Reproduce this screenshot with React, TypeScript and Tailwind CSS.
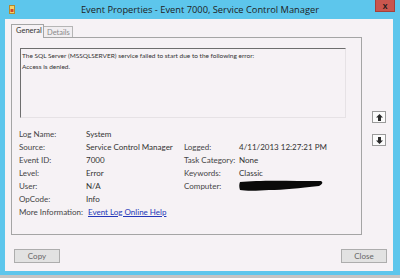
import React from 'react';

const LEFT_ROWS: [string, React.ReactNode][] = [
  ['Log Name:', 'System'],
  ['Source:', 'Service Control Manager'],
  ['Event ID:', '7000'],
  ['Level:', 'Error'],
  ['User:', 'N/A'],
  ['OpCode:', 'Info'],
];

const RIGHT_ROWS: Record<number, [string, React.ReactNode]> = {
  1: ['Logged:', '4/11/2013 12:27:21 PM'],
  2: ['Task Category:', 'None'],
  3: ['Keywords:', 'Classic'],
};

const Redacted = () => (
  <svg width="84" height="12" viewBox="0 0 84 12" className="block">
    <path d="M1 2 C 20 0, 50 1, 82 1 C 84 2, 84 4, 80 6 C 60 8, 45 10, 30 10 C 18 11, 6 11, 1 10 C 0 7, 0 4, 1 2 Z" fill="#0a0a0a" />
  </svg>
);

const ArrowButton = ({ down }: { down?: boolean }) => (
  <button className="w-[14px] h-[12px] border border-[#9a9a9a] bg-[#fbfbfb] flex items-center justify-center">
    <svg width="7" height="7" viewBox="0 0 7 7" className={down ? 'rotate-180' : ''}>
      <path d="M3.5 0 L7 3.5 L5 3.5 L5 7 L2 7 L2 3.5 L0 3.5 Z" fill="#2b2b2b" />
    </svg>
  </button>
);

export default function App() {
  return (
    <div className="w-[400px] h-[278px] bg-[#c4c4c4] font-['Lato','Liberation_Sans',sans-serif] text-[8px] text-[#3a3a3a]">
      <div className="h-[275px] bg-[#5dc6ec] flex flex-col">
        {/* title bar */}
        <div className="h-[19px] grid grid-cols-[1fr_auto_1fr] items-center">
          <div className="pl-[9px]">
            <svg width="6" height="9" viewBox="0 0 6 9" className="block">
              <rect x="0.5" y="0.5" width="5" height="8" fill="#f3d36a" stroke="#b48a2c" strokeWidth="1" />
              <rect x="1.5" y="4" width="3" height="3" fill="#d2452f" />
            </svg>
          </div>
          <div className="text-[9.3px] text-[#1d1d1d] font-['Open_Sans','Liberation_Sans',sans-serif]">
            Event Properties - Event 7000, Service Control Manager
          </div>
          <div className="self-start flex justify-end pr-[5px]">
            <div className="w-[20px] h-[12px] bg-[#c9564e] border border-[#a5403a] border-t-0 flex items-center justify-center text-[9px] font-bold text-[#1a1a1a] leading-none">
              x
            </div>
          </div>
        </div>

        {/* client area */}
        <div className="flex-1 ml-[5px] mr-[7px] mb-[4px] bg-[#f6f2f5] flex flex-col">
          <div className="flex pt-[5px] pl-[6px]">
            <div className="w-[351px]">
              <div className="flex items-end h-[13px]">
                <div className="h-[14px] -mb-px relative z-10 w-[33px] border border-b-0 border-[#a5a5a5] bg-[#f6f2f5] pl-[4px] leading-[12px] text-[7.5px] text-[#333]">
                  General
                </div>
                <div className="h-[11px] w-[29px] border border-l-0 border-b-0 border-[#b5b5b5] bg-[#f1eef1] pl-[3px] leading-[11px] text-[7.5px] text-[#8a8a8a]">
                  Details
                </div>
              </div>
              <div className="h-[198px] border border-[#a5a5a5] bg-[#f6f2f5]">
                <div className="ml-[8px] mt-[10px] w-[326px] h-[70px] border border-t-[#6e6e6e] border-l-[#6e6e6e] border-r-[#e6e2e5] border-b-[#e6e2e5] px-[1px] pt-[1px] leading-[11px] text-[6.5px] text-[#333]">
                  <div>The SQL Server (MSSQLSERVER) service failed to start due to the following error:</div>
                  <div>Access is denied.</div>
                </div>
                <div className="ml-[7px] mt-[9px] grid grid-cols-[67px_98px_55px_1fr] auto-rows-[13px] items-center text-[#454545]">
                  {LEFT_ROWS.map(([label, value], i) => (
                    <React.Fragment key={label}>
                      <div>{label}</div>
                      <div className="text-[#333]">{value}</div>
                      <div>{RIGHT_ROWS[i]?.[0] ?? (i === 4 ? 'Computer:' : '')}</div>
                      <div className="text-[#333]">{i === 4 ? <Redacted /> : RIGHT_ROWS[i]?.[1] ?? ''}</div>
                    </React.Fragment>
                  ))}
                  <div>More Information:</div>
                  <div className="col-span-3 pl-[2px]">
                    <span className="text-[#2437b8] underline">Event Log Online Help</span>
                  </div>
                </div>
              </div>
            </div>
            <div className="ml-[10px] mt-[87px] flex flex-col gap-[11px]">
              <ArrowButton />
              <ArrowButton down />
            </div>
          </div>

          <div className="mt-[14px] flex justify-between pl-[9px] pr-[6px]">
            <button className="w-[46px] h-[14px] border border-[#adadad] bg-[#e2e2e2] text-[#666] text-[8px] leading-none">Copy</button>
            <button className="w-[46px] h-[14px] border border-[#adadad] bg-[#e2e2e2] text-[#666] text-[8px] leading-none">Close</button>
          </div>
        </div>
      </div>
    </div>
  );
}
